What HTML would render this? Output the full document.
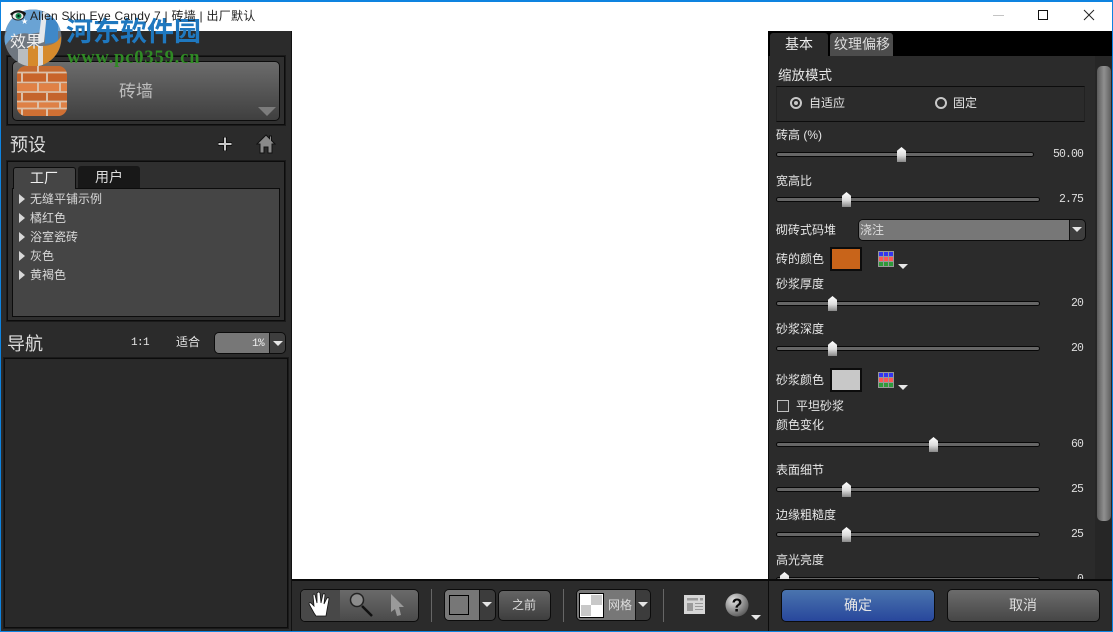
<!DOCTYPE html>
<html lang="zh"><head><meta charset="utf-8"><title>Alien Skin Eye Candy 7</title>
<style>
html,body{margin:0;padding:0;width:1113px;height:632px;overflow:hidden;background:#2b2b2b}
*{box-sizing:border-box}
body{font-family:"Liberation Sans","WenQuanYi Zen Hei","Noto Sans CJK SC",sans-serif;font-size:12px;color:#e6e6e6;position:relative}
.a,.t,.tr,.th,.v,.fr,.btn{position:absolute}
.t{line-height:16px;height:16px;white-space:nowrap}
.b{font-size:16px;line-height:20px;height:20px;color:#ddd}
.fr{border:1px solid #0c0c0c;outline:1px solid #1a1a1a;outline-offset:0}
.tr{height:5px;background:#666;border:1px solid #080808;border-radius:3px;left:776px}
.th{width:9px;height:15px;background:linear-gradient(#fff,#ddd 55%,#888);clip-path:polygon(50% 0,100% 25%,100% 100%,0 100%,0 25%)}
.v{font-family:"Liberation Mono",monospace;font-size:11.500px;letter-spacing:-.9px;right:30px;line-height:14px;color:#ddd}
.li{position:absolute;left:30px;line-height:16px;height:16px;color:#d8d8d8;white-space:nowrap}
.ar{position:absolute;left:19px;width:0;height:0;border-left:6px solid #d8d8d8;border-top:5px solid transparent;border-bottom:5px solid transparent}
.dn{position:absolute;width:0;height:0;border-top:5px solid #e6e6e6;border-left:5px solid transparent;border-right:5px solid transparent}
</style></head><body>

<!-- title bar -->
<div class="a" style="left:0;top:0;width:1113px;height:31px;background:#fff;border-top:2px solid #0e83e0"></div>
<div class="a" style="left:993px;top:15px;width:11px;height:1px;background:#c4c4c4"></div>
<div class="a" style="left:1038px;top:10px;width:10px;height:10px;border:1px solid #111"></div>
<svg class="a" style="left:1083px;top:9px" width="12" height="12"><path d="M1 1L11 11M11 1L1 11" stroke="#222" stroke-width="1" fill="none"/></svg>

<!-- left panel -->
<div class="a" style="left:0;top:31px;width:292px;height:601px;background:#2b2b2b"></div>

<div class="fr" style="left:7px;top:56px;width:278px;height:69px;background:#2f2f2f"></div>
<div class="a" style="left:12px;top:61px;width:268px;height:60px;border:1px solid #0c0c0c;border-radius:5px;background:linear-gradient(#6c6c6c,#3f3f3f)"></div>

<div class="t" style="left:119px;top:82px;font-size:17px;line-height:20px;height:20px;color:#bdbdbd">砖墙</div>
<div class="a" style="left:258px;top:107px;width:0;height:0;border-top:9px solid #7c7c7c;border-left:9px solid transparent;border-right:9px solid transparent"></div>

<div class="t" style="left:10px;top:135px;font-size:18px;line-height:20px;height:20px;color:#ddd">预设</div>
<svg class="a" style="left:216px;top:135px" width="18" height="18"><path d="M9 2V16M2 9H16" stroke="#111" stroke-width="4"/><path d="M9 2.500V15.500M2.500 9H15.500" stroke="#c8c8c8" stroke-width="2"/></svg>
<svg class="a" style="left:256px;top:134px" width="20" height="20" viewBox="0 0 20 20"><path d="M10 1L1 10H4V19H8V13H12V19H16V10H19L15.500 6.500V2H13.500V4.500Z" fill="#8a8a8a" stroke="#111" stroke-width="1"/></svg>

<div class="fr" style="left:7px;top:161px;width:278px;height:160px;background:#2f2f2f"></div>
<div class="a" style="left:13px;top:167px;width:63px;height:22px;background:#454545;border:1px solid #0c0c0c;border-bottom:0;border-radius:3px 3px 0 0;z-index:2"></div>
<div class="a" style="left:78px;top:166px;width:62px;height:22px;background:#181818;border-radius:3px 3px 0 0"></div>
<div class="a" style="left:12px;top:188px;width:268px;height:129px;background:#454545;border:1px solid #0c0c0c"></div>
<div class="t" style="left:30px;top:170px;font-size:14px;color:#f0f0f0;z-index:3">工厂</div>
<div class="t" style="left:95px;top:169px;font-size:14px;color:#ddd">用户</div>
<div class="ar" style="top:194px"></div><div class="li" style="top:191px">无缝平铺示例</div>
<div class="ar" style="top:213px"></div><div class="li" style="top:210px">橘红色</div>
<div class="ar" style="top:232px"></div><div class="li" style="top:229px">浴室瓷砖</div>
<div class="ar" style="top:251px"></div><div class="li" style="top:248px">灰色</div>
<div class="ar" style="top:270px"></div><div class="li" style="top:267px">黄褐色</div>

<div class="t" style="left:7px;top:334px;font-size:18px;line-height:20px;height:20px;color:#ddd">导航</div>
<div class="t" style="left:131px;top:335px;font-family:'Liberation Mono',monospace;font-size:11px;letter-spacing:-.6px">1:1</div>
<div class="t" style="left:176px;top:334px">适合</div>
<div class="a" style="left:214px;top:332px;width:72px;height:22px;background:#3e3e3e;border:1px solid #0c0c0c;border-radius:5px;overflow:hidden"><div style="width:55px;height:20px;background:#777;border-right:1px solid #111"></div></div>
<div class="t" style="left:252px;top:336px;font-family:'Liberation Mono',monospace;font-size:11px;letter-spacing:-.6px;color:#eee">1%</div>
<div class="dn" style="left:273px;top:341px"></div>
<div class="fr" style="left:4px;top:358px;width:284px;height:270px;background:#292929"></div>

<!-- center -->
<div class="a" style="left:292px;top:31px;width:476px;height:548px;background:#fff"></div>
<div class="a" style="left:292px;top:579px;width:476px;height:2px;background:#0a0a0a"></div>
<div class="a" style="left:291px;top:31px;width:1px;height:601px;background:#111"></div>

<!-- toolbar -->
<div class="a" style="left:300px;top:589px;width:119px;height:33px;border:1px solid #0c0c0c;border-radius:5px;overflow:hidden;background:linear-gradient(#6a6a6a,#4a4a4a)"><div style="width:39px;height:31px;background:#484848"></div></div>
<svg class="a" style="left:308px;top:591px" width="24" height="27" viewBox="0 0 24 27"><path d="M6 22L1 13Q1 11 3 12L6 15L5 4Q6 2 7 4L9 12L9 2Q11 0 12 2L13 12L15 3Q17 2 17 4L16 13L19 7Q21 6 21 8L19 19L18 25H8Z" fill="#fff" stroke="#111" stroke-width=".8"/></svg>
<svg class="a" style="left:348px;top:592px" width="26" height="26" viewBox="0 0 26 26"><path d="M14 14L24 24" stroke="#111" stroke-width="2.500"/><circle cx="9" cy="8" r="6.500" fill="#8c8c8c" stroke="#222" stroke-width="1.500"/></svg>
<svg class="a" style="left:389px;top:592px" width="18" height="26" viewBox="0 0 18 26"><path d="M2 2L15 15L10 15L12 23L8 24L6 17L2 20Z" fill="#9a9a9a"/></svg>
<div class="a" style="left:431px;top:589px;width:1px;height:33px;background:#666"></div>
<div class="a" style="left:444px;top:589px;width:52px;height:32px;background:#3c3c3c;border:1px solid #0c0c0c;border-radius:5px;overflow:hidden"><div style="width:35px;height:30px;background:#777;border-right:1px solid #111"></div></div>
<div class="a" style="left:449px;top:595px;width:20px;height:20px;background:#777;border:1px solid #000"></div>
<div class="dn" style="left:482px;top:602px"></div>
<div class="a" style="left:498px;top:590px;width:53px;height:31px;border:1px solid #0c0c0c;border-radius:5px;background:linear-gradient(#646464,#3e3e3e)"></div>
<div class="t" style="left:512px;top:597px;color:#ddd">之前</div>
<div class="a" style="left:563px;top:589px;width:1px;height:33px;background:#666"></div>
<div class="a" style="left:576px;top:589px;width:75px;height:32px;background:#3c3c3c;border:1px solid #0c0c0c;border-radius:5px;overflow:hidden"><div style="width:59px;height:30px;background:#777;border-right:1px solid #111"></div></div>
<div class="a" style="left:579px;top:593px;width:25px;height:25px;border:1px solid #000;background:#fff"><div style="position:absolute;left:11px;top:1px;width:11px;height:10px;background:#c8c8c8"></div><div style="position:absolute;left:1px;top:11px;width:10px;height:11px;background:#c8c8c8"></div></div>
<div class="t" style="left:608px;top:597px;color:#ddd">网格</div>
<div class="dn" style="left:638px;top:602px"></div>
<div class="a" style="left:663px;top:589px;width:1px;height:33px;background:#666"></div>
<svg class="a" style="left:684px;top:595px" width="21" height="19" viewBox="0 0 21 19"><rect width="21" height="19" fill="#d6d6d6"/><rect x="3" y="3" width="11" height="2.500" fill="#9a9a9a"/><rect x="16" y="3" width="3" height="2.500" fill="#9a9a9a"/><rect x="3" y="8" width="6" height="8" fill="#9a9a9a"/><path d="M11 8.500H19M11 11.500H19M11 14.500H19" stroke="#9a9a9a"/></svg>
<svg class="a" style="left:725px;top:593px" width="25" height="24" viewBox="0 0 25 24"><defs><radialGradient id="hg" cx=".35" cy=".3" r=".8"><stop offset="0" stop-color="#e4e4e4"/><stop offset="1" stop-color="#505050"/></radialGradient></defs><circle cx="12" cy="12" r="11.500" fill="url(#hg)"/><text x="12" y="18.500" text-anchor="middle" font-family="Liberation Sans" font-weight="700" font-size="18" fill="#0a0a0a">?</text></svg>
<div class="dn" style="left:751px;top:615px"></div>

<!-- right panel -->
<div class="a" style="left:768px;top:31px;width:345px;height:601px;background:#2b2b2b;border-left:1px solid #0c0c0c"></div>
<div class="a" style="left:768px;top:31px;width:345px;height:25px;background:#000"></div>
<div class="a" style="left:770px;top:33px;width:58px;height:24px;background:#2b2b2b;border-radius:3px 3px 0 0"></div>
<div class="a" style="left:830px;top:33px;width:63px;height:23px;background:#4c4c4c;border-radius:3px 3px 0 0"></div>
<div class="t" style="left:785px;top:36px;font-size:14px;color:#eee">基本</div>
<div class="t" style="left:834px;top:36px;font-size:14px;color:#ddd">纹理偏移</div>
<div class="a" style="left:1095px;top:56px;width:17px;height:524px;background:#262626"></div>
<div class="a" style="left:1097px;top:66px;width:14px;height:455px;border-radius:5px;background:linear-gradient(90deg,#5a5a5a,#909090 50%,#606060)"></div>

<div class="t" style="left:778px;top:68px;font-size:13.500px">缩放模式</div>
<div class="a" style="left:776px;top:86px;width:309px;height:36px;border:1px solid #0c0c0c;border-left-color:#222;border-right-color:#222"></div>
<div class="a" style="left:790px;top:97px;width:12px;height:12px;border:2px solid #c8c8c8;border-radius:50%"><div style="width:4px;height:4px;margin:2px;background:#c8c8c8;border-radius:50%"></div></div>
<div class="t" style="left:809px;top:95px">自适应</div>
<div class="a" style="left:935px;top:97px;width:12px;height:12px;border:2px solid #c8c8c8;border-radius:50%"></div>
<div class="t" style="left:953px;top:95px">固定</div>

<div class="t" style="left:776px;top:127px">砖高 (%)</div>
<div class="tr" style="top:152px;width:258px"></div><div class="th" style="left:897px;top:147px"></div><div class="v" style="top:148px">50.00</div>
<div class="t" style="left:776px;top:173px">宽高比</div>
<div class="tr" style="top:197px;width:264px"></div><div class="th" style="left:842px;top:192px"></div><div class="v" style="top:193px">2.75</div>

<div class="t" style="left:776px;top:222px">砌砖式码堆</div>
<div class="a" style="left:858px;top:219px;width:228px;height:22px;background:#3e3e3e;border:1px solid #0c0c0c;border-radius:5px;overflow:hidden"><div style="width:211px;height:20px;background:#777;border-right:1px solid #111"></div></div>
<div class="t" style="left:860px;top:222px;color:#ddd">浇注</div>
<div class="dn" style="left:1072px;top:227px"></div>

<div class="t" style="left:776px;top:251px">砖的颜色</div>
<div class="a" style="left:830px;top:247px;width:32px;height:24px;background:#c8641a;border:2px solid #0c0c0c"></div>
<svg class="a" style="left:878px;top:251px" width="16" height="16"><rect width="16" height="16" fill="#999"/><g fill="#3535f0"><rect x="1" y="1" width="4" height="4"/><rect x="6" y="1" width="4" height="4"/><rect x="11" y="1" width="4" height="4"/></g><g fill="#f55"><rect x="1" y="6" width="4" height="4"/><rect x="6" y="6" width="4" height="4"/><rect x="11" y="6" width="4" height="4"/></g><g fill="#2f9a3a"><rect x="1" y="11" width="4" height="4"/><rect x="6" y="11" width="4" height="4"/><rect x="11" y="11" width="4" height="4"/></g></svg>
<div class="dn" style="left:898px;top:264px"></div>

<div class="t" style="left:776px;top:276px">砂浆厚度</div>
<div class="tr" style="top:301px;width:264px"></div><div class="th" style="left:828px;top:296px"></div><div class="v" style="top:297px">20</div>
<div class="t" style="left:776px;top:321px">砂浆深度</div>
<div class="tr" style="top:346px;width:264px"></div><div class="th" style="left:828px;top:341px"></div><div class="v" style="top:342px">20</div>

<div class="t" style="left:776px;top:372px">砂浆颜色</div>
<div class="a" style="left:830px;top:368px;width:32px;height:24px;background:#c8c8c8;border:2px solid #0c0c0c"></div>
<svg class="a" style="left:878px;top:372px" width="16" height="16"><rect width="16" height="16" fill="#999"/><g fill="#3535f0"><rect x="1" y="1" width="4" height="4"/><rect x="6" y="1" width="4" height="4"/><rect x="11" y="1" width="4" height="4"/></g><g fill="#f55"><rect x="1" y="6" width="4" height="4"/><rect x="6" y="6" width="4" height="4"/><rect x="11" y="6" width="4" height="4"/></g><g fill="#2f9a3a"><rect x="1" y="11" width="4" height="4"/><rect x="6" y="11" width="4" height="4"/><rect x="11" y="11" width="4" height="4"/></g></svg>
<div class="dn" style="left:898px;top:385px"></div>

<div class="a" style="left:777px;top:400px;width:12px;height:12px;background:#333;border:1px solid #c0c0c0"></div>
<div class="t" style="left:796px;top:398px">平坦砂浆</div>

<div class="t" style="left:776px;top:417px">颜色变化</div>
<div class="tr" style="top:442px;width:264px"></div><div class="th" style="left:929px;top:437px"></div><div class="v" style="top:438px">60</div>
<div class="t" style="left:776px;top:462px">表面细节</div>
<div class="tr" style="top:487px;width:264px"></div><div class="th" style="left:842px;top:482px"></div><div class="v" style="top:483px">25</div>
<div class="t" style="left:776px;top:507px">边缘粗糙度</div>
<div class="tr" style="top:532px;width:264px"></div><div class="th" style="left:842px;top:527px"></div><div class="v" style="top:528px">25</div>
<div class="t" style="left:776px;top:552px">高光亮度</div>
<div class="tr" style="top:577px;width:264px"></div><div class="th" style="left:780px;top:572px"></div><div class="v" style="top:573px">0</div>

<div class="a" style="left:769px;top:579px;width:344px;height:53px;background:#2b2b2b;border-top:2px solid #0a0a0a"></div>
<div class="a" style="left:781px;top:589px;width:154px;height:33px;border:1px solid #0c0c0c;border-radius:5px;background:linear-gradient(#4a74ae,#28479c)"></div>
<div class="t" style="left:844px;top:597px;font-size:14px;color:#e6e6e6">确定</div>
<div class="a" style="left:947px;top:589px;width:153px;height:33px;border:1px solid #0c0c0c;border-radius:5px;background:linear-gradient(#6c6c6c,#464646)"></div>
<div class="t" style="left:1009px;top:597px;font-size:14px;color:#ddd">取消</div>

<!-- window border -->
<div class="a" style="left:0;top:0;width:1px;height:632px;background:#0e83e0"></div>
<div class="a" style="left:1112px;top:0;width:1px;height:632px;background:#0e83e0"></div>
<div class="a" style="left:0;top:631px;width:1113px;height:1px;background:#0e83e0"></div>

<!-- watermark logo -->
<svg class="a" style="left:0;top:8px" width="70" height="62" viewBox="0 0 70 62">
<defs><clipPath id="cc"><circle cx="33" cy="30" r="28.500"/></clipPath></defs>
<g clip-path="url(#cc)">
<rect width="70" height="62" fill="#6f7780"/>
<rect width="70" height="23" fill="#6aa3d4"/>
<path d="M4 30Q8 14 26 12Q40 11 42 24L30 26Q14 22 4 40Z" fill="#6aa3d4"/>
<path d="M45 10H58V34L45 36Z" fill="#3f88c8"/>
<path d="M42 4L47 4L44 34L38 36Z" fill="#e4e8ec"/>
<path d="M61 28A28.500 28.500 0 0 1 40 58L42 38Q56 38 61 28Z" fill="#d68a2c"/>
<rect x="18" y="41" width="10" height="20" fill="#b9bdc0"/>
<rect x="28" y="38" width="10" height="23" fill="#d68a2c"/>
<rect x="38" y="38" width="5" height="23" fill="#dcdcdc"/>
</g>
<text x="21" y="16" font-size="8" fill="#fff" font-family="DejaVu Sans">★</text>
</svg>

<div class="t b" style="left:10px;top:33px;color:#eee">效果</div>

<!-- brick icon above the logo -->
<svg class="a" style="left:17px;top:66px" width="50" height="50" viewBox="0 0 50 50">
<defs><clipPath id="cb"><rect width="50" height="50" rx="9"/></clipPath></defs>
<g clip-path="url(#cb)"><rect width="50" height="50" fill="#c96b2c"/>
<rect y="0" width="50" height="6" fill="#c56a30"/><rect y="8" width="50" height="8" fill="#c8642a"/><rect y="18" width="50" height="7" fill="#e08145"/><rect y="27" width="50" height="8" fill="#c4642c"/><rect y="36" width="50" height="6" fill="#de8045"/><rect y="43" width="50" height="7" fill="#cf7034"/>
<path d="M0 6.500H50M0 16.500H50M0 26H50M0 35.500H50M0 42.500H50" stroke="#dcc0a8" stroke-width="1.800"/>
<path d="M21 0V6M5 7V16M30 7V16M21 17V26M43 17V26M5 27V35M30 27V35M21 36V42M43 36V42M5 43V50M30 43V50" stroke="#dcc0a8" stroke-width="2"/></g></svg>

<!-- watermark text -->
<div class="t" style="left:66px;top:13px;height:34px;line-height:34px;font-family:'Noto Sans CJK SC','WenQuanYi Zen Hei',sans-serif;font-weight:700;font-size:27px;color:#1f78bf">河东软件园</div>
<div class="t" style="left:67px;top:49px;height:18px;line-height:18px;font-family:'Liberation Serif',serif;font-weight:700;font-size:18.500px;color:#2f8a24;letter-spacing:.85px">www.pc0359.cn</div>

<!-- title text stays readable over the watermark -->
<svg class="a" style="left:9px;top:8px" width="18" height="14" viewBox="0 0 18 14"><path d="M1 6Q8-1 17 5L16 8Q9 3 3 8Z" fill="#111"/><ellipse cx="9" cy="8" rx="6" ry="4" fill="#eee" stroke="#222"/><circle cx="9.500" cy="8" r="3" fill="#128a50"/><circle cx="9.500" cy="8" r="1.200" fill="#021"/></svg>
<div class="t" style="left:30px;top:8px;color:#222;font-size:12px;letter-spacing:.25px">Alien Skin Eye Candy 7 | 砖墙 | 出厂默认</div>
</body></html>
